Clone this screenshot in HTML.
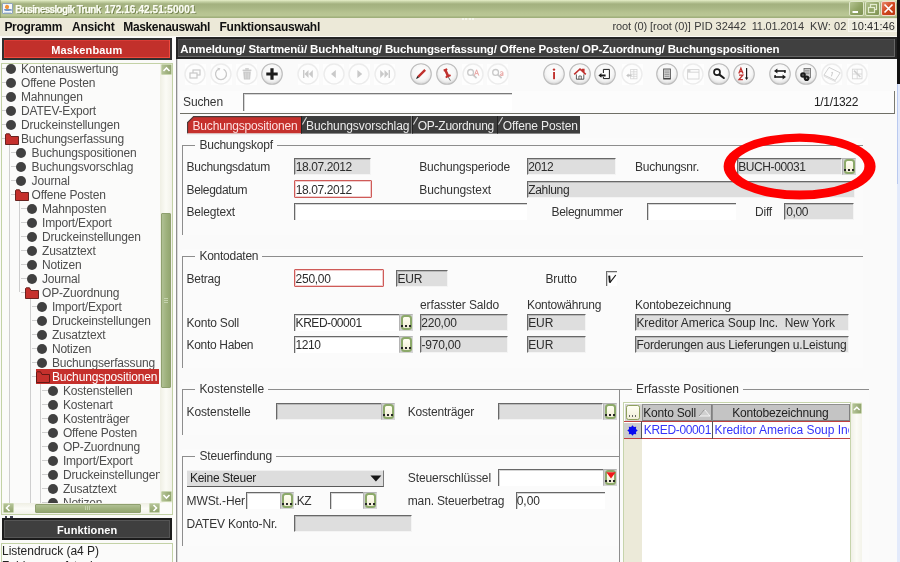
<!DOCTYPE html>
<html><head><meta charset="utf-8"><title>Businesslogik Trunk</title>
<style>
html,body{margin:0;padding:0;}
body{width:900px;height:562px;overflow:hidden;background:#fafafa;font-family:"Liberation Sans",sans-serif;}
#root{will-change:transform;position:relative;width:900px;height:562px;overflow:hidden;background:#f9f9f9;}
#root div,#root span,#root svg{position:absolute;box-sizing:border-box;}
#root span{white-space:pre;display:block;}

</style></head>
<body>
<div id="root">
<div style="left:0px;top:0px;width:900px;height:18px;background:linear-gradient(#e6efc9 0,#c9d5a9 1.5px,#a3b17f 4px,#a9b785 8px,#b7c492 13px,#b9c694 16px,#9dad79 17px,#a3b27f 18px);"></div>
<div style="left:1.5px;top:3px;width:11px;height:11px;background:#f6f7fa;border:1px solid #8ea4bc;border-radius:1px;"></div>
<div style="left:5.2px;top:4.6px;width:4.4px;height:4.2px;background:#f0923c;border-radius:50% 50% 40% 40%;transform:rotate(25deg);"></div>
<div style="left:4px;top:8.6px;width:6.6px;height:2.6px;background:#6f93c4;border-radius:0 0 2px 2px;"></div>
<div style="left:10px;top:8.8px;width:1.6px;height:1.8px;border:0.6px solid #6f93c4;border-radius:50%;"></div>
<div style="left:4px;top:12px;width:7px;height:0.8px;background:#c9d6e6;"></div>
<div style="left:0px;top:0px;width:1px;height:18px;background:rgba(120,135,90,0.55);"></div>
<span style="left:15.2px;top:3px;font-size:10px;line-height:14px;color:#fcfdf4;font-weight:bold;letter-spacing:-0.65px;text-shadow:1px 1px 0 #6f7d4a;-webkit-text-stroke:0.25px #fcfdf4;">Businesslogik Trunk</span>
<span style="left:104.4px;top:3px;font-size:10px;line-height:14px;color:#fcfdf4;font-weight:bold;letter-spacing:0.09px;text-shadow:1px 1px 0 #6f7d4a;-webkit-text-stroke:0.25px #fcfdf4;">172.16.42.51:50001</span>
<div style="left:849px;top:1px;width:15px;height:15px;background:linear-gradient(135deg,#b5c492,#8fa263 55%,#7f9354);border:1px solid #dfe6c9;border-radius:2px;"></div>
<div style="left:865px;top:1px;width:15px;height:15px;background:linear-gradient(135deg,#b5c492,#8fa263 55%,#7f9354);border:1px solid #dfe6c9;border-radius:2px;"></div>
<div style="left:881px;top:1px;width:15px;height:15px;background:linear-gradient(135deg,#e88a6a,#d0451f 50%,#b8380f);border:1px solid #f3d9cd;border-radius:2px;"></div>
<svg style="left:849px;top:1px" width="15" height="15"><rect x="3.5" y="10" width="5.5" height="2" fill="#fff"/></svg>
<svg style="left:865px;top:1px" width="15" height="15" fill="none" stroke="#e4ecd0" stroke-width="1.2"><rect x="5.5" y="3.5" width="6" height="5"/><rect x="3.5" y="6.5" width="6" height="5" fill="#93a667"/></svg>
<svg style="left:881px;top:1px" width="15" height="15" stroke="#fff" stroke-width="1.7"><path d="M3.5 3.5 L11.5 11.5 M11.5 3.5 L3.5 11.5"/></svg>
<div style="left:0px;top:18px;width:900px;height:19px;background:#ece9d8;"></div>
<div style="left:0px;top:35.5px;width:897px;height:1.5px;background:#fbfaf4;"></div>
<span style="left:4.4px;top:20px;font-size:12px;line-height:14px;color:#111;font-weight:bold;letter-spacing:-0.30px;">Programm</span>
<span style="left:72px;top:20px;font-size:12px;line-height:14px;color:#111;font-weight:bold;letter-spacing:-0.23px;">Ansicht</span>
<span style="left:123.3px;top:20px;font-size:12px;line-height:14px;color:#111;font-weight:bold;letter-spacing:-0.36px;">Maskenauswahl</span>
<span style="left:219.5px;top:20px;font-size:12px;line-height:14px;color:#111;font-weight:bold;letter-spacing:-0.26px;">Funktionsauswahl</span>
<div style="left:462px;top:18px;width:12px;height:2px;border-top:2px dotted #f7f8ee;"></div>
<div style="left:848px;top:19px;width:49px;height:13px;background:#efede0;border:1px solid #f6f5ec;"></div>
<span style="left:612.5px;top:19px;font-size:11px;line-height:14px;color:#3a3a3a;font-weight:normal;letter-spacing:-0.10px;">root (0) [root (0)]</span>
<span style="left:694.3px;top:19px;font-size:11px;line-height:14px;color:#3a3a3a;font-weight:normal;letter-spacing:-0.03px;">PID 32442</span>
<span style="left:751.7px;top:19px;font-size:11px;line-height:14px;color:#3a3a3a;font-weight:normal;letter-spacing:-0.20px;">11.01.2014</span>
<span style="left:810px;top:19px;font-size:11px;line-height:14px;color:#3a3a3a;font-weight:normal;letter-spacing:0.10px;">KW: 02</span>
<span style="left:851.5px;top:19px;font-size:11px;line-height:14px;color:#2a2a2a;font-weight:normal;letter-spacing:0.08px;">10:41:46</span>
<div style="left:897px;top:0px;width:3px;height:84px;background:#111;"></div>
<div style="left:897px;top:84px;width:3px;height:478px;background:#e3eafb;"></div>
<div style="left:897px;top:84px;width:1px;height:100px;background:#b9c9ef;"></div>
<div style="left:0px;top:37px;width:176px;height:525px;background:#fafaf8;"></div>
<div style="left:2px;top:38px;width:170px;height:21.7px;background:#c2302b;border:2px solid #303030;box-shadow:inset -1px -1px 0 0 #f04a3e, inset 1px 1px 0 0 #d83a34;"></div>
<span style="left:51.3px;top:43px;font-size:11px;line-height:14px;color:#fff;font-weight:bold;letter-spacing:0.13px;">Maskenbaum</span>
<div style="left:1px;top:63px;width:172px;height:452px;background:#fbfbfa;border:1px solid #c3d2a6;"></div>
<div style="left:2px;top:64px;width:158px;height:439px;overflow:hidden;">
<div style="left:6.5px;top:80px;width:1px;height:361px;border-left:1px solid #cfcfcf;"></div>
<div style="left:17px;top:136px;width:1px;height:92px;border-left:1px solid #cfcfcf;"></div>
<div style="left:27.5px;top:234px;width:1px;height:207px;border-left:1px solid #cfcfcf;"></div>
<div style="left:38px;top:319px;width:1px;height:122px;border-left:1px solid #cfcfcf;"></div>
<div style="left:0px;top:4px;width:5.0px;height:1px;border-top:1px solid #cfcfcf;"></div>
<div style="left:4.0px;top:-0.29999999999999716px;width:10px;height:10px;background:#404040;border-radius:50%;"></div>
<span style="left:19px;top:-2px;font-size:12px;line-height:14px;color:#4e4e4e;font-weight:normal;letter-spacing:-0.18px;">Kontenauswertung</span>
<div style="left:0px;top:18px;width:5.0px;height:1px;border-top:1px solid #cfcfcf;"></div>
<div style="left:4.0px;top:13.700000000000003px;width:10px;height:10px;background:#404040;border-radius:50%;"></div>
<span style="left:19px;top:12px;font-size:12px;line-height:14px;color:#4e4e4e;font-weight:normal;letter-spacing:-0.18px;">Offene Posten</span>
<div style="left:0px;top:32px;width:5.0px;height:1px;border-top:1px solid #cfcfcf;"></div>
<div style="left:4.0px;top:27.700000000000003px;width:10px;height:10px;background:#404040;border-radius:50%;"></div>
<span style="left:19px;top:26px;font-size:12px;line-height:14px;color:#4e4e4e;font-weight:normal;letter-spacing:-0.18px;">Mahnungen</span>
<div style="left:0px;top:46px;width:5.0px;height:1px;border-top:1px solid #cfcfcf;"></div>
<div style="left:4.0px;top:41.7px;width:10px;height:10px;background:#404040;border-radius:50%;"></div>
<span style="left:19px;top:40px;font-size:12px;line-height:14px;color:#4e4e4e;font-weight:normal;letter-spacing:-0.18px;">DATEV-Export</span>
<div style="left:0px;top:60px;width:5.0px;height:1px;border-top:1px solid #cfcfcf;"></div>
<div style="left:4.0px;top:55.7px;width:10px;height:10px;background:#404040;border-radius:50%;"></div>
<span style="left:19px;top:54px;font-size:12px;line-height:14px;color:#4e4e4e;font-weight:normal;letter-spacing:-0.18px;">Druckeinstellungen</span>
<div style="left:0px;top:74px;width:5.0px;height:1px;border-top:1px solid #cfcfcf;"></div>
<svg style="left:2.5px;top:68.69999999999999px" width="14" height="12" viewBox="0 0 14 12"><path d="M0.5 1.5 L0.5 11.5 L13.5 11.5 L13.5 3.5 L6 3.5 L4.5 0.8 L1.2 0.8 Z" fill="#c5302c" stroke="#5a1613" stroke-width="0.9"/></svg>
<span style="left:19px;top:68px;font-size:12px;line-height:14px;color:#4e4e4e;font-weight:normal;letter-spacing:-0.18px;">Buchungserfassung</span>
<div style="left:8.899999999999999px;top:88px;width:6.5px;height:1px;border-top:1px solid #cfcfcf;"></div>
<div style="left:14.399999999999999px;top:83.69999999999999px;width:10px;height:10px;background:#404040;border-radius:50%;"></div>
<span style="left:29.6px;top:82px;font-size:12px;line-height:14px;color:#4e4e4e;font-weight:normal;letter-spacing:-0.18px;">Buchungspositionen</span>
<div style="left:8.899999999999999px;top:102px;width:6.5px;height:1px;border-top:1px solid #cfcfcf;"></div>
<div style="left:14.399999999999999px;top:97.69999999999999px;width:10px;height:10px;background:#404040;border-radius:50%;"></div>
<span style="left:29.6px;top:96px;font-size:12px;line-height:14px;color:#4e4e4e;font-weight:normal;letter-spacing:-0.18px;">Buchungsvorschlag</span>
<div style="left:8.899999999999999px;top:116px;width:6.5px;height:1px;border-top:1px solid #cfcfcf;"></div>
<div style="left:14.399999999999999px;top:111.69999999999999px;width:10px;height:10px;background:#404040;border-radius:50%;"></div>
<span style="left:29.6px;top:110px;font-size:12px;line-height:14px;color:#4e4e4e;font-weight:normal;letter-spacing:-0.18px;">Journal</span>
<div style="left:8.899999999999999px;top:130px;width:6.5px;height:1px;border-top:1px solid #cfcfcf;"></div>
<svg style="left:12.899999999999999px;top:124.69999999999999px" width="14" height="12" viewBox="0 0 14 12"><path d="M0.5 1.5 L0.5 11.5 L13.5 11.5 L13.5 3.5 L6 3.5 L4.5 0.8 L1.2 0.8 Z" fill="#c5302c" stroke="#5a1613" stroke-width="0.9"/></svg>
<span style="left:29.6px;top:124px;font-size:12px;line-height:14px;color:#4e4e4e;font-weight:normal;letter-spacing:-0.18px;">Offene Posten</span>
<div style="left:19.3px;top:144px;width:6.5px;height:1px;border-top:1px solid #cfcfcf;"></div>
<div style="left:24.8px;top:139.7px;width:10px;height:10px;background:#404040;border-radius:50%;"></div>
<span style="left:40px;top:138px;font-size:12px;line-height:14px;color:#4e4e4e;font-weight:normal;letter-spacing:-0.18px;">Mahnposten</span>
<div style="left:19.3px;top:158px;width:6.5px;height:1px;border-top:1px solid #cfcfcf;"></div>
<div style="left:24.8px;top:153.7px;width:10px;height:10px;background:#404040;border-radius:50%;"></div>
<span style="left:40px;top:152px;font-size:12px;line-height:14px;color:#4e4e4e;font-weight:normal;letter-spacing:-0.18px;">Import/Export</span>
<div style="left:19.3px;top:172px;width:6.5px;height:1px;border-top:1px solid #cfcfcf;"></div>
<div style="left:24.8px;top:167.7px;width:10px;height:10px;background:#404040;border-radius:50%;"></div>
<span style="left:40px;top:166px;font-size:12px;line-height:14px;color:#4e4e4e;font-weight:normal;letter-spacing:-0.18px;">Druckeinstellungen</span>
<div style="left:19.3px;top:186px;width:6.5px;height:1px;border-top:1px solid #cfcfcf;"></div>
<div style="left:24.8px;top:181.7px;width:10px;height:10px;background:#404040;border-radius:50%;"></div>
<span style="left:40px;top:180px;font-size:12px;line-height:14px;color:#4e4e4e;font-weight:normal;letter-spacing:-0.18px;">Zusatztext</span>
<div style="left:19.3px;top:200px;width:6.5px;height:1px;border-top:1px solid #cfcfcf;"></div>
<div style="left:24.8px;top:195.7px;width:10px;height:10px;background:#404040;border-radius:50%;"></div>
<span style="left:40px;top:194px;font-size:12px;line-height:14px;color:#4e4e4e;font-weight:normal;letter-spacing:-0.18px;">Notizen</span>
<div style="left:19.3px;top:214px;width:6.5px;height:1px;border-top:1px solid #cfcfcf;"></div>
<div style="left:24.8px;top:209.7px;width:10px;height:10px;background:#404040;border-radius:50%;"></div>
<span style="left:40px;top:208px;font-size:12px;line-height:14px;color:#4e4e4e;font-weight:normal;letter-spacing:-0.18px;">Journal</span>
<div style="left:19.3px;top:228px;width:6.5px;height:1px;border-top:1px solid #cfcfcf;"></div>
<svg style="left:23.3px;top:222.7px" width="14" height="12" viewBox="0 0 14 12"><path d="M0.5 1.5 L0.5 11.5 L13.5 11.5 L13.5 3.5 L6 3.5 L4.5 0.8 L1.2 0.8 Z" fill="#c5302c" stroke="#5a1613" stroke-width="0.9"/></svg>
<span style="left:40px;top:222px;font-size:12px;line-height:14px;color:#4e4e4e;font-weight:normal;letter-spacing:-0.18px;">OP-Zuordnung</span>
<div style="left:29.700000000000003px;top:242px;width:6.5px;height:1px;border-top:1px solid #cfcfcf;"></div>
<div style="left:35.2px;top:237.7px;width:10px;height:10px;background:#404040;border-radius:50%;"></div>
<span style="left:49.9px;top:236px;font-size:12px;line-height:14px;color:#4e4e4e;font-weight:normal;letter-spacing:-0.18px;">Import/Export</span>
<div style="left:29.700000000000003px;top:256px;width:6.5px;height:1px;border-top:1px solid #cfcfcf;"></div>
<div style="left:35.2px;top:251.7px;width:10px;height:10px;background:#404040;border-radius:50%;"></div>
<span style="left:49.9px;top:250px;font-size:12px;line-height:14px;color:#4e4e4e;font-weight:normal;letter-spacing:-0.18px;">Druckeinstellungen</span>
<div style="left:29.700000000000003px;top:270px;width:6.5px;height:1px;border-top:1px solid #cfcfcf;"></div>
<div style="left:35.2px;top:265.7px;width:10px;height:10px;background:#404040;border-radius:50%;"></div>
<span style="left:49.9px;top:264px;font-size:12px;line-height:14px;color:#4e4e4e;font-weight:normal;letter-spacing:-0.18px;">Zusatztext</span>
<div style="left:29.700000000000003px;top:284px;width:6.5px;height:1px;border-top:1px solid #cfcfcf;"></div>
<div style="left:35.2px;top:279.7px;width:10px;height:10px;background:#404040;border-radius:50%;"></div>
<span style="left:49.9px;top:278px;font-size:12px;line-height:14px;color:#4e4e4e;font-weight:normal;letter-spacing:-0.18px;">Notizen</span>
<div style="left:29.700000000000003px;top:298px;width:6.5px;height:1px;border-top:1px solid #cfcfcf;"></div>
<div style="left:35.2px;top:293.7px;width:10px;height:10px;background:#404040;border-radius:50%;"></div>
<span style="left:49.9px;top:292px;font-size:12px;line-height:14px;color:#4e4e4e;font-weight:normal;letter-spacing:-0.18px;">Buchungserfassung</span>
<div style="left:29.700000000000003px;top:312px;width:6.5px;height:1px;border-top:1px solid #cfcfcf;"></div>
<div style="left:33.7px;top:305.4px;width:123.8px;height:14.4px;background:#c5302c;"></div>
<svg style="left:33.7px;top:306.7px" width="14" height="12" viewBox="0 0 14 12"><path d="M0.5 1.5 L0.5 11.5 L13.5 11.5 L13.5 3.5 L6 3.5 L4.5 0.8 L1.2 0.8 Z" fill="#c5302c" stroke="#5a1613" stroke-width="0.9"/></svg>
<span style="left:49.9px;top:306px;font-size:12px;line-height:14px;color:#fff;font-weight:normal;letter-spacing:-0.15px;">Buchungspositionen</span>
<div style="left:40.1px;top:326px;width:6.5px;height:1px;border-top:1px solid #cfcfcf;"></div>
<div style="left:45.6px;top:321.7px;width:10px;height:10px;background:#404040;border-radius:50%;"></div>
<span style="left:60.9px;top:320px;font-size:12px;line-height:14px;color:#4e4e4e;font-weight:normal;letter-spacing:-0.18px;">Kostenstellen</span>
<div style="left:40.1px;top:340px;width:6.5px;height:1px;border-top:1px solid #cfcfcf;"></div>
<div style="left:45.6px;top:335.7px;width:10px;height:10px;background:#404040;border-radius:50%;"></div>
<span style="left:60.9px;top:334px;font-size:12px;line-height:14px;color:#4e4e4e;font-weight:normal;letter-spacing:-0.18px;">Kostenart</span>
<div style="left:40.1px;top:354px;width:6.5px;height:1px;border-top:1px solid #cfcfcf;"></div>
<div style="left:45.6px;top:349.7px;width:10px;height:10px;background:#404040;border-radius:50%;"></div>
<span style="left:60.9px;top:348px;font-size:12px;line-height:14px;color:#4e4e4e;font-weight:normal;letter-spacing:-0.18px;">Kostenträger</span>
<div style="left:40.1px;top:368px;width:6.5px;height:1px;border-top:1px solid #cfcfcf;"></div>
<div style="left:45.6px;top:363.7px;width:10px;height:10px;background:#404040;border-radius:50%;"></div>
<span style="left:60.9px;top:362px;font-size:12px;line-height:14px;color:#4e4e4e;font-weight:normal;letter-spacing:-0.18px;">Offene Posten</span>
<div style="left:40.1px;top:382px;width:6.5px;height:1px;border-top:1px solid #cfcfcf;"></div>
<div style="left:45.6px;top:377.7px;width:10px;height:10px;background:#404040;border-radius:50%;"></div>
<span style="left:60.9px;top:376px;font-size:12px;line-height:14px;color:#4e4e4e;font-weight:normal;letter-spacing:-0.18px;">OP-Zuordnung</span>
<div style="left:40.1px;top:396px;width:6.5px;height:1px;border-top:1px solid #cfcfcf;"></div>
<div style="left:45.6px;top:391.7px;width:10px;height:10px;background:#404040;border-radius:50%;"></div>
<span style="left:60.9px;top:390px;font-size:12px;line-height:14px;color:#4e4e4e;font-weight:normal;letter-spacing:-0.18px;">Import/Export</span>
<div style="left:40.1px;top:410px;width:6.5px;height:1px;border-top:1px solid #cfcfcf;"></div>
<div style="left:45.6px;top:405.7px;width:10px;height:10px;background:#404040;border-radius:50%;"></div>
<span style="left:60.9px;top:404px;font-size:12px;line-height:14px;color:#4e4e4e;font-weight:normal;letter-spacing:-0.18px;">Druckeinstellungen</span>
<div style="left:40.1px;top:424px;width:6.5px;height:1px;border-top:1px solid #cfcfcf;"></div>
<div style="left:45.6px;top:419.7px;width:10px;height:10px;background:#404040;border-radius:50%;"></div>
<span style="left:60.9px;top:418px;font-size:12px;line-height:14px;color:#4e4e4e;font-weight:normal;letter-spacing:-0.18px;">Zusatztext</span>
<div style="left:40.1px;top:438px;width:6.5px;height:1px;border-top:1px solid #cfcfcf;"></div>
<div style="left:45.6px;top:433.7px;width:10px;height:10px;background:#404040;border-radius:50%;"></div>
<span style="left:60.9px;top:432px;font-size:12px;line-height:14px;color:#4e4e4e;font-weight:normal;letter-spacing:-0.18px;">Notizen</span>
</div>
<div style="left:160px;top:64px;width:12px;height:439px;background:linear-gradient(90deg,#efefe4,#fbfbf6 50%,#f1f1e8);"></div>
<div style="left:160.5px;top:64px;width:11px;height:11px;background:linear-gradient(90deg,#b4c397,#9fb07d 60%,#92a570);border:1px solid #c9d6b0;border-radius:1px;"></div>
<svg style="left:160.5px;top:64px" width="11" height="11" fill="none" stroke="#fff" stroke-width="1.6"><path d="M2.5 7 L5.5 4 L8.5 7"/></svg>
<div style="left:160.5px;top:491px;width:11px;height:11px;background:linear-gradient(90deg,#b4c397,#9fb07d 60%,#92a570);border:1px solid #c9d6b0;border-radius:1px;"></div>
<svg style="left:160.5px;top:491px" width="11" height="11" fill="none" stroke="#fff" stroke-width="1.6"><path d="M2.5 4 L5.5 7 L8.5 4"/></svg>
<div style="left:161px;top:213px;width:10px;height:175px;background:linear-gradient(90deg,#b0c094,#a0b27e 50%,#93a670);border:1px solid #8fa06f;border-radius:1px;"></div>
<div style="left:164px;top:298px;width:4px;height:5px;border-top:1px solid #c5d2ad;border-bottom:1px solid #c5d2ad;"></div>
<div style="left:164px;top:300px;width:4px;height:1px;background:#c5d2ad;"></div>
<div style="left:2px;top:503px;width:158px;height:11px;background:linear-gradient(#efefe4,#fbfbf6 50%,#f1f1e8);"></div>
<div style="left:2.5px;top:503px;width:11px;height:10px;background:linear-gradient(#b4c397,#9fb07d 60%,#92a570);border:1px solid #c9d6b0;border-radius:1px;"></div>
<svg style="left:2.5px;top:503px" width="11" height="10" fill="none" stroke="#fff" stroke-width="1.6"><path d="M6.5 2 L3.5 5 L6.5 8"/></svg>
<div style="left:149px;top:503px;width:11px;height:10px;background:linear-gradient(#b4c397,#9fb07d 60%,#92a570);border:1px solid #c9d6b0;border-radius:1px;"></div>
<svg style="left:149px;top:503px" width="11" height="10" fill="none" stroke="#fff" stroke-width="1.6"><path d="M4.5 2 L7.5 5 L4.5 8"/></svg>
<div style="left:35px;top:503.5px;width:106px;height:9px;background:linear-gradient(#b0c094,#a0b27e 50%,#93a670);border:1px solid #8fa06f;border-radius:1px;"></div>
<div style="left:85px;top:506px;width:5px;height:4px;border-left:1px solid #c5d2ad;border-right:1px solid #c5d2ad;"></div>
<div style="left:87px;top:506px;width:1px;height:4px;background:#c5d2ad;"></div>
<div style="left:5px;top:516px;width:2px;height:1.5px;background:#445;"></div>
<div style="left:10px;top:516px;width:3px;height:1.5px;background:#445;"></div>
<div style="left:2px;top:517.5px;width:170px;height:22.5px;background:#3f3f3f;border:2px solid #1c1c1c;box-shadow:inset 0 0 0 1px #555;"></div>
<span style="left:57px;top:523px;font-size:11px;line-height:14px;color:#fff;font-weight:bold;letter-spacing:0.10px;">Funktionen</span>
<div style="left:1px;top:543px;width:172px;height:25px;background:#fbfbfa;border:1px solid #c3d2a6;"></div>
<span style="left:2px;top:544px;font-size:12px;line-height:14px;color:#222;font-weight:normal;letter-spacing:-0.02px;">Listendruck (a4 P)</span>
<span style="left:2px;top:559px;font-size:12px;line-height:14px;color:#222;font-weight:normal;">Zahlungsaufstockung</span>
<div style="left:173px;top:37px;width:3px;height:525px;background:#fdfdfb;"></div>
<div style="left:176px;top:59px;width:1px;height:503px;background:#8e8e8e;"></div>
<div style="left:177px;top:59px;width:1px;height:503px;background:#d9d9d9;"></div>
<div style="left:177.5px;top:59px;width:719.5px;height:503px;background:#fafafa;"></div>
<div style="left:176px;top:37px;width:721px;height:22px;background:#404040;border:2px solid #242424;box-shadow:inset -1px -1px 0 0 #666, inset 1px 1px 0 0 #4c4c4c;"></div>
<span style="left:180.3px;top:42px;font-size:11.5px;line-height:14px;color:#fff;font-weight:bold;letter-spacing:-0.14px;">Anmeldung/ Startmenü/ Buchhaltung/ Buchungserfassung/ Offene Posten/ OP-Zuordnung/ Buchungspositionen</span>
<div style="left:184.8px;top:63.8px;width:21px;height:21px;background:#fefefe;"></div>
<svg style="left:183.3px;top:62.3px" width="24" height="24" viewBox="0 0 24 24"><circle cx="12" cy="12" r="10" fill="#fdfdfd" stroke="#ececec" stroke-width="1.5"/></svg>
<svg style="left:185.3px;top:64.3px" width="20" height="20" viewBox="0 0 20 20"><g fill="#fdfdfd" stroke="#c9c9c9" stroke-width="1.2"><rect x="8" y="6" width="7" height="5"/><rect x="5" y="9" width="7" height="5"/></g></svg>
<div style="left:210.5px;top:63.8px;width:21px;height:21px;background:#fefefe;"></div>
<svg style="left:209px;top:62.3px" width="24" height="24" viewBox="0 0 24 24"><circle cx="12" cy="12" r="10" fill="#fdfdfd" stroke="#ececec" stroke-width="1.5"/></svg>
<svg style="left:211px;top:64.3px" width="20" height="20" viewBox="0 0 20 20"><path d="M7.6 5.2 A5.5 5.5 0 1 0 12.6 5.3" fill="none" stroke="#c9c9c9" stroke-width="1.3"/><path d="M6.2 3.8 L9.4 4.2 L8 6.8 Z" fill="#c9c9c9"/></svg>
<div style="left:236.1px;top:63.8px;width:21px;height:21px;background:#fefefe;"></div>
<svg style="left:234.6px;top:62.3px" width="24" height="24" viewBox="0 0 24 24"><circle cx="12" cy="12" r="10" fill="#fdfdfd" stroke="#ececec" stroke-width="1.5"/></svg>
<svg style="left:236.6px;top:64.3px" width="20" height="20" viewBox="0 0 20 20"><g fill="#c9c9c9"><rect x="5.6" y="5.6" width="8.8" height="1.5"/><rect x="8.2" y="4.2" width="3.6" height="1.5"/><path d="M6.2 7.6 L13.8 7.6 L13.1 15.6 L6.9 15.6 Z"/></g><path d="M8.4 8.6 V14.6 M10 8.6 V14.6 M11.6 8.6 V14.6" stroke="#e2e2e2" stroke-width="0.6"/></svg>
<svg style="left:260px;top:62.3px" width="24" height="24" viewBox="0 0 24 24"><defs><radialGradient id="g272" cx="50%" cy="40%" r="60%"><stop offset="0" stop-color="#fefefe"/><stop offset="0.62" stop-color="#f7f7f7"/><stop offset="0.8" stop-color="#ececec"/><stop offset="0.9" stop-color="#dddddd"/></radialGradient></defs><circle cx="12" cy="12" r="10.3" fill="url(#g272)" stroke="#bcbcbc" stroke-width="1.1"/></svg>
<svg style="left:262px;top:64.3px" width="20" height="20" viewBox="0 0 20 20"><path d="M8.4 4.3 h3.2 v4.1 h4.1 v3.2 h-4.1 v4.1 h-3.2 v-4.1 h-4.1 v-3.2 h4.1 Z" fill="#1c1c1c"/></svg>
<div style="left:297.7px;top:63.8px;width:21px;height:21px;background:#fefefe;"></div>
<svg style="left:296.2px;top:62.3px" width="24" height="24" viewBox="0 0 24 24"><circle cx="12" cy="12" r="10" fill="#fdfdfd" stroke="#ececec" stroke-width="1.5"/></svg>
<svg style="left:298.2px;top:64.3px" width="20" height="20" viewBox="0 0 20 20"><g fill="#c9c9c9"><rect x="5" y="6" width="1.4" height="8"/><path d="M10.5 6 L10.5 14 L6.5 10 Z"/><path d="M14.8 6 L14.8 14 L10.8 10 Z"/></g></svg>
<div style="left:323.0px;top:63.8px;width:21px;height:21px;background:#fefefe;"></div>
<svg style="left:321.5px;top:62.3px" width="24" height="24" viewBox="0 0 24 24"><circle cx="12" cy="12" r="10" fill="#fdfdfd" stroke="#ececec" stroke-width="1.5"/></svg>
<svg style="left:323.5px;top:64.3px" width="20" height="20" viewBox="0 0 20 20"><path d="M11.8 6 L11.8 14 L7 10 Z" fill="#c9c9c9"/></svg>
<div style="left:348.7px;top:63.8px;width:21px;height:21px;background:#fefefe;"></div>
<svg style="left:347.2px;top:62.3px" width="24" height="24" viewBox="0 0 24 24"><circle cx="12" cy="12" r="10" fill="#fdfdfd" stroke="#ececec" stroke-width="1.5"/></svg>
<svg style="left:349.2px;top:64.3px" width="20" height="20" viewBox="0 0 20 20"><path d="M8.4 6 L8.4 14 L13.2 10 Z" fill="#c9c9c9"/></svg>
<div style="left:374.0px;top:63.8px;width:21px;height:21px;background:#fefefe;"></div>
<svg style="left:372.5px;top:62.3px" width="24" height="24" viewBox="0 0 24 24"><circle cx="12" cy="12" r="10" fill="#fdfdfd" stroke="#ececec" stroke-width="1.5"/></svg>
<svg style="left:374.5px;top:64.3px" width="20" height="20" viewBox="0 0 20 20"><g fill="#c9c9c9"><rect x="13.6" y="6" width="1.4" height="8"/><path d="M9.5 6 L9.5 14 L13.5 10 Z"/><path d="M5.2 6 L5.2 14 L9.2 10 Z"/></g></svg>
<svg style="left:409.3px;top:62.3px" width="24" height="24" viewBox="0 0 24 24"><defs><radialGradient id="g421" cx="50%" cy="40%" r="60%"><stop offset="0" stop-color="#fefefe"/><stop offset="0.62" stop-color="#f7f7f7"/><stop offset="0.8" stop-color="#ececec"/><stop offset="0.9" stop-color="#dddddd"/></radialGradient></defs><circle cx="12" cy="12" r="10.3" fill="url(#g421)" stroke="#bcbcbc" stroke-width="1.1"/></svg>
<svg style="left:411.3px;top:64.3px" width="20" height="20" viewBox="0 0 20 20"><path d="M13.3 5 L15 6.7 L8 13.7 L6.3 12 Z" fill="#c0312e"/><path d="M6.3 12 L8 13.7 L5 15 Z" fill="#1c1c1c"/></svg>
<svg style="left:434.6px;top:62.3px" width="24" height="24" viewBox="0 0 24 24"><defs><radialGradient id="g446" cx="50%" cy="40%" r="60%"><stop offset="0" stop-color="#fefefe"/><stop offset="0.62" stop-color="#f7f7f7"/><stop offset="0.8" stop-color="#ececec"/><stop offset="0.9" stop-color="#dddddd"/></radialGradient></defs><circle cx="12" cy="12" r="10.3" fill="url(#g446)" stroke="#bcbcbc" stroke-width="1.1"/></svg>
<svg style="left:436.6px;top:64.3px" width="20" height="20" viewBox="0 0 20 20"><g fill="#c0312e"><path d="M6.4 5.6 L9.8 4.2 L10.6 5.8 L9.9 6.4 L11.8 10.4 L13.4 10.6 L14 12 L9 14.2 L8.4 12.8 L9.4 11.6 L7.6 7.6 L6.9 7.4 Z"/></g><path d="M11.4 13.2 L13.4 16.6" stroke="#555" stroke-width="0.9"/></svg>
<div style="left:462.0px;top:63.8px;width:21px;height:21px;background:#fefefe;"></div>
<svg style="left:460.5px;top:62.3px" width="24" height="24" viewBox="0 0 24 24"><circle cx="12" cy="12" r="10" fill="#fdfdfd" stroke="#ececec" stroke-width="1.5"/></svg>
<svg style="left:462.5px;top:64.3px" width="20" height="20" viewBox="0 0 20 20"><circle cx="7.6" cy="8.4" r="2.9" fill="none" stroke="#c9c9c9" stroke-width="1.3"/><path d="M9.8 10.6 L13.6 14.2" stroke="#c9c9c9" stroke-width="1.7"/><path d="M11.4 11.6 L13.6 5.8 L15.8 11.6 M12.3 9.6 H14.9" fill="none" stroke="#e9a4a2" stroke-width="1"/></svg>
<div style="left:487.2px;top:63.8px;width:21px;height:21px;background:#fefefe;"></div>
<svg style="left:485.7px;top:62.3px" width="24" height="24" viewBox="0 0 24 24"><circle cx="12" cy="12" r="10" fill="#fdfdfd" stroke="#ececec" stroke-width="1.5"/></svg>
<svg style="left:487.7px;top:64.3px" width="20" height="20" viewBox="0 0 20 20"><circle cx="7.6" cy="8.4" r="2.9" fill="none" stroke="#c9c9c9" stroke-width="1.3"/><path d="M9.8 10.6 L13.6 14.2" stroke="#c9c9c9" stroke-width="1.7"/><path d="M12.2 8.2 Q13.6 7 14.9 8.2 V11.8 M14.9 9.8 Q12 9.6 12.1 10.9 Q12.4 12.2 14.9 11" fill="none" stroke="#e9a4a2" stroke-width="1"/></svg>
<svg style="left:542.4px;top:62.3px" width="24" height="24" viewBox="0 0 24 24"><defs><radialGradient id="g554" cx="50%" cy="40%" r="60%"><stop offset="0" stop-color="#fefefe"/><stop offset="0.62" stop-color="#f7f7f7"/><stop offset="0.8" stop-color="#ececec"/><stop offset="0.9" stop-color="#dddddd"/></radialGradient></defs><circle cx="12" cy="12" r="10.3" fill="url(#g554)" stroke="#bcbcbc" stroke-width="1.1"/></svg>
<svg style="left:544.4px;top:64.3px" width="20" height="20" viewBox="0 0 20 20"><rect x="9.1" y="8" width="1.9" height="7.2" fill="#c0312e"/><circle cx="10" cy="5.6" r="1.2" fill="#c0312e"/></svg>
<svg style="left:568.3px;top:62.3px" width="24" height="24" viewBox="0 0 24 24"><defs><radialGradient id="g580" cx="50%" cy="40%" r="60%"><stop offset="0" stop-color="#fefefe"/><stop offset="0.62" stop-color="#f7f7f7"/><stop offset="0.8" stop-color="#ececec"/><stop offset="0.9" stop-color="#dddddd"/></radialGradient></defs><circle cx="12" cy="12" r="10.3" fill="url(#g580)" stroke="#bcbcbc" stroke-width="1.1"/></svg>
<svg style="left:570.3px;top:64.3px" width="20" height="20" viewBox="0 0 20 20"><path d="M6.4 10 L6.4 15.2 L13.8 15.2 L13.8 10 L10 6.6 Z" fill="#fff"/><path d="M6.4 10.4 L6.4 15.2 L13.8 15.2 L13.8 10.4" fill="none" stroke="#333" stroke-width="0.8"/><path d="M8.9 15.2 V12 H11.3 V15.2" fill="none" stroke="#333" stroke-width="0.7"/><path d="M4.2 10.4 L10 5 L12.6 7.4 L12.6 5.6 L13.8 5.6 L13.8 8.6 L15.8 10.4" fill="none" stroke="#c0312e" stroke-width="1.6"/></svg>
<svg style="left:593.4px;top:62.3px" width="24" height="24" viewBox="0 0 24 24"><defs><radialGradient id="g605" cx="50%" cy="40%" r="60%"><stop offset="0" stop-color="#fefefe"/><stop offset="0.62" stop-color="#f7f7f7"/><stop offset="0.8" stop-color="#ececec"/><stop offset="0.9" stop-color="#dddddd"/></radialGradient></defs><circle cx="12" cy="12" r="10.3" fill="url(#g605)" stroke="#bcbcbc" stroke-width="1.1"/></svg>
<svg style="left:595.4px;top:64.3px" width="20" height="20" viewBox="0 0 20 20"><path d="M8.4 5.4 L14.4 5.4 L14.4 14.6 L8.4 14.6 L8.4 13" fill="#fff" stroke="#1c1c1c" stroke-width="1"/><path d="M8.4 9 L8.4 5.4" stroke="#1c1c1c" stroke-width="1"/><path d="M3.4 11.4 L6.4 9 L6.4 10.4 L10.6 10.4 L10.6 12.4 L6.4 12.4 L6.4 13.8 Z" fill="#1c1c1c"/></svg>
<div style="left:621.5px;top:63.8px;width:21px;height:21px;background:#fefefe;"></div>
<svg style="left:620px;top:62.3px" width="24" height="24" viewBox="0 0 24 24"><circle cx="12" cy="12" r="10" fill="#fdfdfd" stroke="#ececec" stroke-width="1.5"/></svg>
<svg style="left:622px;top:64.3px" width="20" height="20" viewBox="0 0 20 20"><g fill="none" stroke="#d6d6d6" stroke-width="0.8"><rect x="8.6" y="5.4" width="6.4" height="9.4"/><path d="M8.6 7.8 H15 M8.6 10.2 H15 M8.6 12.4 H15 M11.8 5.4 V14.8"/></g><path d="M4.2 11.4 L6.6 9.4 L6.6 10.6 L9.6 10.6 L9.6 12.2 L6.6 12.2 L6.6 13.4 Z" fill="#c4c4c4"/></svg>
<svg style="left:655.1px;top:62.3px" width="24" height="24" viewBox="0 0 24 24"><defs><radialGradient id="g667" cx="50%" cy="40%" r="60%"><stop offset="0" stop-color="#fefefe"/><stop offset="0.62" stop-color="#f7f7f7"/><stop offset="0.8" stop-color="#ececec"/><stop offset="0.9" stop-color="#dddddd"/></radialGradient></defs><circle cx="12" cy="12" r="10.3" fill="url(#g667)" stroke="#bcbcbc" stroke-width="1.1"/></svg>
<svg style="left:657.1px;top:64.3px" width="20" height="20" viewBox="0 0 20 20"><rect x="6.6" y="5" width="6.8" height="10" fill="#d9d9d9" stroke="#555" stroke-width="0.9"/><path d="M7.6 7 H12.4 M7.6 8.8 H12.4 M7.6 10.6 H12.4 M7.6 12.4 H12.4" stroke="#888" stroke-width="0.8"/><rect x="6.6" y="14" width="6.8" height="1.2" fill="#444"/></svg>
<div style="left:682.5px;top:63.8px;width:21px;height:21px;background:#fefefe;"></div>
<svg style="left:681px;top:62.3px" width="24" height="24" viewBox="0 0 24 24"><circle cx="12" cy="12" r="10" fill="#fdfdfd" stroke="#ececec" stroke-width="1.5"/></svg>
<svg style="left:683px;top:64.3px" width="20" height="20" viewBox="0 0 20 20"><g fill="#fdfdfd" stroke="#d4d4d4" stroke-width="0.9"><rect x="4.6" y="5.6" width="11.4" height="9.4"/><path d="M4.6 8.2 H16"/><rect x="5.4" y="6.2" width="1.6" height="1.4" fill="#d4d4d4"/></g></svg>
<svg style="left:706.5px;top:62.3px" width="24" height="24" viewBox="0 0 24 24"><defs><radialGradient id="g718" cx="50%" cy="40%" r="60%"><stop offset="0" stop-color="#fefefe"/><stop offset="0.62" stop-color="#f7f7f7"/><stop offset="0.8" stop-color="#ececec"/><stop offset="0.9" stop-color="#dddddd"/></radialGradient></defs><circle cx="12" cy="12" r="10.3" fill="url(#g718)" stroke="#bcbcbc" stroke-width="1.1"/></svg>
<svg style="left:708.5px;top:64.3px" width="20" height="20" viewBox="0 0 20 20"><circle cx="8" cy="8.2" r="3" fill="#fff" stroke="#1c1c1c" stroke-width="1.7"/><path d="M10.4 10.6 L14.8 14" stroke="#1c1c1c" stroke-width="2.1" stroke-linecap="round"/></svg>
<svg style="left:732.4px;top:62.3px" width="24" height="24" viewBox="0 0 24 24"><defs><radialGradient id="g744" cx="50%" cy="40%" r="60%"><stop offset="0" stop-color="#fefefe"/><stop offset="0.62" stop-color="#f7f7f7"/><stop offset="0.8" stop-color="#ececec"/><stop offset="0.9" stop-color="#dddddd"/></radialGradient></defs><circle cx="12" cy="12" r="10.3" fill="url(#g744)" stroke="#bcbcbc" stroke-width="1.1"/></svg>
<svg style="left:734.4px;top:64.3px" width="20" height="20" viewBox="0 0 20 20"><path d="M4.8 9.4 L6.9 4.2 L9 9.4 M5.7 7.7 H8.1" fill="none" stroke="#c0312e" stroke-width="1.3"/><path d="M5 11.2 H8.8 L5 15.6 H8.9" fill="none" stroke="#c0312e" stroke-width="1.3"/><path d="M12.6 4 V14" stroke="#1c1c1c" stroke-width="1.2"/><path d="M10.8 13.4 H14.4 L12.6 16 Z" fill="#1c1c1c"/></svg>
<svg style="left:768.3px;top:62.3px" width="24" height="24" viewBox="0 0 24 24"><defs><radialGradient id="g780" cx="50%" cy="40%" r="60%"><stop offset="0" stop-color="#fefefe"/><stop offset="0.62" stop-color="#f7f7f7"/><stop offset="0.8" stop-color="#ececec"/><stop offset="0.9" stop-color="#dddddd"/></radialGradient></defs><circle cx="12" cy="12" r="10.3" fill="url(#g780)" stroke="#bcbcbc" stroke-width="1.1"/></svg>
<svg style="left:770.3px;top:64.3px" width="20" height="20" viewBox="0 0 20 20"><g fill="#1c1c1c"><path d="M7.4 4.6 L7.4 9.4 L4 7 Z"/><rect x="7" y="6.2" width="8.6" height="1.6"/><rect x="14.2" y="6.2" width="1.4" height="2.8"/><path d="M12.6 10.6 L12.6 15.4 L16 13 Z"/><rect x="4.4" y="12.2" width="8.6" height="1.6"/><rect x="4.4" y="11" width="1.4" height="2.8"/></g></svg>
<svg style="left:794.2px;top:62.3px" width="24" height="24" viewBox="0 0 24 24"><defs><radialGradient id="g806" cx="50%" cy="40%" r="60%"><stop offset="0" stop-color="#fefefe"/><stop offset="0.62" stop-color="#f7f7f7"/><stop offset="0.8" stop-color="#ececec"/><stop offset="0.9" stop-color="#dddddd"/></radialGradient></defs><circle cx="12" cy="12" r="10.3" fill="url(#g806)" stroke="#bcbcbc" stroke-width="1.1"/></svg>
<svg style="left:796.2px;top:64.3px" width="20" height="20" viewBox="0 0 20 20"><rect x="8" y="4.4" width="6.4" height="9.4" fill="#cfcfcf" stroke="#666" stroke-width="0.8"/><path d="M9 6.4 H13.4 M9 8 H13.4 M9 9.6 H13.4" stroke="#888" stroke-width="0.7"/><circle cx="7" cy="11" r="2.8" fill="#1c1c1c"/><circle cx="10.6" cy="14.2" r="2.8" fill="#1c1c1c"/><circle cx="7" cy="11" r="0.7" fill="#999"/><circle cx="10.6" cy="14.2" r="0.7" fill="#999"/></svg>
<div style="left:821.1px;top:63.8px;width:21px;height:21px;background:#fefefe;"></div>
<svg style="left:819.6px;top:62.3px" width="24" height="24" viewBox="0 0 24 24"><circle cx="12" cy="12" r="10" fill="#fdfdfd" stroke="#ececec" stroke-width="1.5"/></svg>
<svg style="left:821.6px;top:64.3px" width="20" height="20" viewBox="0 0 20 20"><path d="M7 3.4 L18.2 8.8 L13.2 16.4 L2 11 Z" fill="#fdfdfd" stroke="#d2d2d2" stroke-width="1"/><path d="M2 11 L2.4 12.4 L13.4 17.6 L13.2 16.4" fill="none" stroke="#d8d8d8" stroke-width="0.8"/><path d="M9.4 8.6 L10.6 8.4 L9.4 12.4" fill="none" stroke="#c4c4c4" stroke-width="0.9"/></svg>
<div style="left:846.8px;top:63.8px;width:21px;height:21px;background:#fefefe;"></div>
<svg style="left:845.3px;top:62.3px" width="24" height="24" viewBox="0 0 24 24"><circle cx="12" cy="12" r="10" fill="#fdfdfd" stroke="#ececec" stroke-width="1.5"/></svg>
<svg style="left:847.3px;top:64.3px" width="20" height="20" viewBox="0 0 20 20"><g fill="none" stroke="#d7d7d7" stroke-width="0.9"><rect x="5.4" y="5.2" width="9.6" height="9.6"/><path d="M10.2 5.2 V14.8 M5.4 10 H15"/></g><path d="M7 6.6 L13.4 13" stroke="#cfcfcf" stroke-width="1.6"/></svg>
<div style="left:180px;top:91px;width:714.5px;height:23.3px;background:#fcfcfc;border-bottom:1.5px solid #6f6f66;border-right:1.5px solid #7a7a70;"></div>
<span style="left:183px;top:95px;font-size:12px;line-height:14px;color:#343434;font-weight:normal;letter-spacing:-0.12px;">Suchen</span>
<div style="left:243px;top:93px;width:269px;height:17.5px;background:#fff;border-top:1px solid #7a7a7a;border-left:1px solid #7a7a7a;box-shadow:inset 1px 1px 0 rgba(90,90,90,0.25);"></div>
<span style="left:814px;top:95px;font-size:12px;line-height:14px;color:#222;font-weight:normal;letter-spacing:-0.34px;">1/1/1322</span>
<svg style="left:187px;top:116.3px" width="114.30000000000001" height="19" viewBox="0 0 114.30000000000001 19"><path d="M0.5 17.5 L0.5 6.6 L6.6 0.6 L114.30000000000001 0.6 L114.30000000000001 17.5 Z" fill="#c5302c"/><path d="M0.5 17.5 L0.5 6.6 L6.6 0.6 L114.30000000000001 0.6" fill="none" stroke="#4a3a3a" stroke-width="1.2"/><rect x="0" y="17.5" width="114.30000000000001" height="0.9" fill="#dcdcdc"/></svg>
<span style="left:192.5px;top:119px;font-size:12px;line-height:14px;color:#fde0e0;font-weight:normal;letter-spacing:-0.17px;">Buchungspositionen</span>
<svg style="left:301.3px;top:116.3px" width="110.69999999999999" height="19" viewBox="0 0 110.69999999999999 19"><rect x="0" y="0" width="110.69999999999999" height="17.6" fill="#3d3d3d"/><rect x="0" y="0" width="1" height="17.6" fill="#222"/><path d="M1.4 8.6 L5.6 1.2" fill="none" stroke="#d8d8d8" stroke-width="1.1"/></svg>
<span style="left:306px;top:119px;font-size:12px;line-height:14px;color:#ececec;font-weight:normal;letter-spacing:-0.08px;">Buchungsvorschlag</span>
<svg style="left:412px;top:116.3px" width="85.19999999999999" height="19" viewBox="0 0 85.19999999999999 19"><rect x="0" y="0" width="85.19999999999999" height="17.6" fill="#3d3d3d"/><rect x="0" y="0" width="1" height="17.6" fill="#222"/><path d="M1.4 8.6 L5.6 1.2" fill="none" stroke="#d8d8d8" stroke-width="1.1"/></svg>
<span style="left:417.8px;top:119px;font-size:12px;line-height:14px;color:#ececec;font-weight:normal;letter-spacing:-0.27px;">OP-Zuordnung</span>
<svg style="left:497.2px;top:116.3px" width="83.30000000000001" height="19" viewBox="0 0 83.30000000000001 19"><rect x="0" y="0" width="83.30000000000001" height="17.6" fill="#3d3d3d"/><rect x="0" y="0" width="1" height="17.6" fill="#222"/><path d="M1.4 8.6 L5.6 1.2" fill="none" stroke="#d8d8d8" stroke-width="1.1"/></svg>
<span style="left:502.7px;top:119px;font-size:12px;line-height:14px;color:#ececec;font-weight:normal;letter-spacing:-0.11px;">Offene Posten</span>
<div style="left:182px;top:138px;width:681px;height:96.5px;background:#fbfbfb;"></div>
<div style="left:182px;top:145px;width:681px;height:89.5px;border-top:1.3px solid #8d8d8d;border-left:1.3px solid #8d8d8d;"></div>
<div style="left:195.4px;top:139px;width:81.4px;height:12px;background:#fbfbfb;"></div>
<span style="left:199.4px;top:138px;font-size:12px;line-height:14px;color:#343434;font-weight:normal;letter-spacing:-0.22px;">Buchungskopf</span>
<div style="left:182px;top:249px;width:681px;height:119px;background:#fbfbfb;"></div>
<div style="left:182px;top:256px;width:681px;height:112px;border-top:1.3px solid #8d8d8d;border-left:1.3px solid #8d8d8d;"></div>
<div style="left:195.4px;top:250px;width:66.9px;height:12px;background:#fbfbfb;"></div>
<span style="left:199.4px;top:249px;font-size:12px;line-height:14px;color:#343434;font-weight:normal;letter-spacing:-0.25px;">Kontodaten</span>
<div style="left:182px;top:381.5px;width:437px;height:53.0px;background:#fbfbfb;"></div>
<div style="left:182px;top:388.5px;width:437px;height:46.0px;border-top:1.3px solid #8d8d8d;border-left:1.3px solid #8d8d8d;"></div>
<div style="left:195.4px;top:382.5px;width:72.6px;height:12px;background:#fbfbfb;"></div>
<span style="left:199.4px;top:382px;font-size:12px;line-height:14px;color:#343434;font-weight:normal;letter-spacing:-0.06px;">Kostenstelle</span>
<div style="left:182px;top:449px;width:437px;height:96.5px;background:#fbfbfb;"></div>
<div style="left:182px;top:456px;width:437px;height:89.5px;border-top:1.3px solid #8d8d8d;border-left:1.3px solid #8d8d8d;"></div>
<div style="left:195.4px;top:450px;width:80.6px;height:12px;background:#fbfbfb;"></div>
<span style="left:199.4px;top:449px;font-size:12px;line-height:14px;color:#343434;font-weight:normal;letter-spacing:-0.16px;">Steuerfindung</span>
<div style="left:619px;top:381.5px;width:250px;height:188.5px;background:#fbfbfb;"></div>
<div style="left:619px;top:388.5px;width:250px;height:181.5px;border-top:1.3px solid #8d8d8d;border-left:1.3px solid #8d8d8d;"></div>
<div style="left:632px;top:382.5px;width:111px;height:12px;background:#fbfbfb;"></div>
<span style="left:636px;top:382px;font-size:12px;line-height:14px;color:#343434;font-weight:normal;letter-spacing:-0.02px;">Erfasste Positionen</span>
<span style="left:186.5px;top:160px;font-size:12px;line-height:14px;color:#343434;font-weight:normal;letter-spacing:-0.25px;">Buchungsdatum</span>
<div style="left:294px;top:158px;width:76.5px;height:17px;background:#dedede;border-top:1px solid #686868;border-left:1px solid #686868;border-right:1px solid #f4f4f4;border-bottom:1px solid #f4f4f4;box-shadow:inset 1px 1px 0 rgba(90,90,90,0.28);"></div>
<span style="left:295.7px;top:160px;font-size:12px;line-height:14px;color:#2c2c2c;font-weight:normal;letter-spacing:-0.40px;">18.07.2012</span>
<span style="left:419.3px;top:160px;font-size:12px;line-height:14px;color:#343434;font-weight:normal;letter-spacing:-0.18px;">Buchungsperiode</span>
<div style="left:527px;top:158px;width:88.5px;height:17px;background:#dedede;border-top:1px solid #686868;border-left:1px solid #686868;border-right:1px solid #f4f4f4;border-bottom:1px solid #f4f4f4;box-shadow:inset 1px 1px 0 rgba(90,90,90,0.28);"></div>
<span style="left:528.2px;top:160px;font-size:12px;line-height:14px;color:#2c2c2c;font-weight:normal;letter-spacing:-0.40px;">2012</span>
<span style="left:635px;top:160px;font-size:12px;line-height:14px;color:#343434;font-weight:normal;letter-spacing:-0.25px;">Buchungsnr.</span>
<div style="left:736.7px;top:158px;width:105.29999999999995px;height:17px;background:#dedede;border-top:1px solid #686868;border-left:1px solid #686868;border-right:1px solid #f4f4f4;border-bottom:1px solid #f4f4f4;box-shadow:inset 1px 1px 0 rgba(90,90,90,0.28);"></div>
<span style="left:738.2px;top:160px;font-size:12px;line-height:14px;color:#2c2c2c;font-weight:normal;letter-spacing:-0.40px;">BUCH-00031</span>
<div style="left:842px;top:157.5px;width:13.6px;height:17.5px;background:#cdcdcd;border:1px solid #b4b4b4;border-right-color:#d6d6d6;border-bottom-color:#d6d6d6;"></div>
<div style="left:843.8px;top:159px;width:11px;height:15px;background:linear-gradient(#fffff2,#f6f3df 70%,#eeead4);border:2px solid #8ca969;border-radius:3.5px;"></div>
<div style="left:844.0px;top:169.4px;width:1.8px;height:1.8px;background:#262626;"></div>
<div style="left:848.1px;top:169.4px;width:1.8px;height:1.8px;background:#262626;"></div>
<div style="left:852.2px;top:169.4px;width:1.8px;height:1.8px;background:#262626;"></div>
<span style="left:186.5px;top:183px;font-size:12px;line-height:14px;color:#343434;font-weight:normal;letter-spacing:-0.33px;">Belegdatum</span>
<div style="left:294px;top:180px;width:78px;height:18px;background:#fff;border:1px solid #cf5b58;border-radius:1px;box-shadow:inset 0 0 0 1px rgba(207,91,88,0.3);"></div>
<span style="left:295.7px;top:183px;font-size:12px;line-height:14px;color:#2c2c2c;font-weight:normal;letter-spacing:-0.40px;">18.07.2012</span>
<span style="left:419.3px;top:183px;font-size:12px;line-height:14px;color:#343434;font-weight:normal;letter-spacing:-0.08px;">Buchungstext</span>
<div style="left:527px;top:181px;width:327.5px;height:17px;background:#dedede;border-top:1px solid #686868;border-left:1px solid #686868;border-right:1px solid #f4f4f4;border-bottom:1px solid #f4f4f4;box-shadow:inset 1px 1px 0 rgba(90,90,90,0.28);"></div>
<span style="left:528.2px;top:183px;font-size:12px;line-height:14px;color:#2c2c2c;font-weight:normal;letter-spacing:-0.33px;">Zahlung</span>
<span style="left:186.5px;top:205px;font-size:12px;line-height:14px;color:#343434;font-weight:normal;letter-spacing:-0.17px;">Belegtext</span>
<div style="left:294px;top:203px;width:233px;height:17px;background:#fff;border-top:1px solid #686868;border-left:1px solid #686868;box-shadow:inset 1px 1px 0 rgba(90,90,90,0.25);"></div>
<span style="left:551.5px;top:205px;font-size:12px;line-height:14px;color:#343434;font-weight:normal;letter-spacing:-0.32px;">Belegnummer</span>
<div style="left:647px;top:203px;width:89px;height:17px;background:#fff;border-top:1px solid #686868;border-left:1px solid #686868;box-shadow:inset 1px 1px 0 rgba(90,90,90,0.25);"></div>
<span style="left:755px;top:205px;font-size:12px;line-height:14px;color:#343434;font-weight:normal;letter-spacing:-0.20px;">Diff</span>
<div style="left:784.4px;top:203px;width:70.10000000000002px;height:17px;background:#dedede;border-top:1px solid #686868;border-left:1px solid #686868;border-right:1px solid #f4f4f4;border-bottom:1px solid #f4f4f4;box-shadow:inset 1px 1px 0 rgba(90,90,90,0.28);"></div>
<span style="left:786.2px;top:205px;font-size:12px;line-height:14px;color:#2c2c2c;font-weight:normal;letter-spacing:-0.34px;">0,00</span>
<span style="left:186.5px;top:272px;font-size:12px;line-height:14px;color:#343434;font-weight:normal;letter-spacing:-0.23px;">Betrag</span>
<div style="left:294px;top:269px;width:90px;height:18px;background:#fff;border:1px solid #cf5b58;border-radius:1px;box-shadow:inset 0 0 0 1px rgba(207,91,88,0.3);"></div>
<span style="left:295.6px;top:272px;font-size:12px;line-height:14px;color:#2c2c2c;font-weight:normal;letter-spacing:-0.28px;">250,00</span>
<div style="left:396.2px;top:270px;width:51.60000000000002px;height:16.5px;background:#dedede;border-top:1px solid #686868;border-left:1px solid #686868;border-right:1px solid #f4f4f4;border-bottom:1px solid #f4f4f4;box-shadow:inset 1px 1px 0 rgba(90,90,90,0.28);"></div>
<span style="left:397.4px;top:272px;font-size:12px;line-height:14px;color:#2c2c2c;font-weight:normal;letter-spacing:-0.18px;">EUR</span>
<span style="left:545.5px;top:272px;font-size:12px;line-height:14px;color:#343434;font-weight:normal;letter-spacing:-0.14px;">Brutto</span>
<div style="left:606px;top:271px;width:11px;height:14.5px;background:#fff;border-top:1px solid #6c6c6c;border-left:1px solid #6c6c6c;box-shadow:inset 1px 1px 0 rgba(90,90,90,0.25);"></div>
<svg style="left:607px;top:272px" width="10" height="13"><path d="M2.2 3.6 L2.9 10.6" fill="none" stroke="#1a1a1a" stroke-width="1.9"/><path d="M2.9 10.6 L8.8 3" fill="none" stroke="#1a1a1a" stroke-width="1.2"/></svg>
<span style="left:420px;top:298px;font-size:12px;line-height:14px;color:#343434;font-weight:normal;letter-spacing:-0.11px;">erfasster Saldo</span>
<span style="left:527px;top:298px;font-size:12px;line-height:14px;color:#343434;font-weight:normal;letter-spacing:-0.28px;">Kontowährung</span>
<span style="left:635px;top:298px;font-size:12px;line-height:14px;color:#343434;font-weight:normal;letter-spacing:-0.21px;">Kontobezeichnung</span>
<span style="left:186.5px;top:316px;font-size:12px;line-height:14px;color:#343434;font-weight:normal;letter-spacing:-0.22px;">Konto Soll</span>
<div style="left:294px;top:314px;width:104.5px;height:17px;background:#fff;border-top:1px solid #686868;border-left:1px solid #686868;box-shadow:inset 1px 1px 0 rgba(90,90,90,0.25);"></div>
<span style="left:295.6px;top:316px;font-size:12px;line-height:14px;color:#2c2c2c;font-weight:normal;letter-spacing:-0.46px;">KRED-00001</span>
<div style="left:399px;top:313.5px;width:13.6px;height:17.5px;background:#cdcdcd;border:1px solid #b4b4b4;border-right-color:#d6d6d6;border-bottom-color:#d6d6d6;"></div>
<div style="left:400.8px;top:315px;width:11px;height:15px;background:linear-gradient(#fffff2,#f6f3df 70%,#eeead4);border:2px solid #8ca969;border-radius:3.5px;"></div>
<div style="left:401.0px;top:325.4px;width:1.8px;height:1.8px;background:#262626;"></div>
<div style="left:405.09999999999997px;top:325.4px;width:1.8px;height:1.8px;background:#262626;"></div>
<div style="left:409.2px;top:325.4px;width:1.8px;height:1.8px;background:#262626;"></div>
<div style="left:420px;top:314px;width:88px;height:17px;background:#dedede;border-top:1px solid #686868;border-left:1px solid #686868;border-right:1px solid #f4f4f4;border-bottom:1px solid #f4f4f4;box-shadow:inset 1px 1px 0 rgba(90,90,90,0.28);"></div>
<span style="left:421.2px;top:316px;font-size:12px;line-height:14px;color:#2c2c2c;font-weight:normal;letter-spacing:-0.20px;">220,00</span>
<div style="left:527px;top:314px;width:58.5px;height:17px;background:#dedede;border-top:1px solid #686868;border-left:1px solid #686868;border-right:1px solid #f4f4f4;border-bottom:1px solid #f4f4f4;box-shadow:inset 1px 1px 0 rgba(90,90,90,0.28);"></div>
<span style="left:528.2px;top:316px;font-size:12px;line-height:14px;color:#2c2c2c;font-weight:normal;letter-spacing:-0.08px;">EUR</span>
<div style="left:635px;top:314px;width:214px;height:17px;background:#dedede;border-top:1px solid #686868;border-left:1px solid #686868;border-right:1px solid #f4f4f4;border-bottom:1px solid #f4f4f4;box-shadow:inset 1px 1px 0 rgba(90,90,90,0.28);"></div>
<span style="left:636.4px;top:316px;font-size:12px;line-height:14px;color:#2c2c2c;font-weight:normal;letter-spacing:-0.04px;">Kreditor America Soup Inc.  New York</span>
<span style="left:186.5px;top:338px;font-size:12px;line-height:14px;color:#343434;font-weight:normal;letter-spacing:-0.31px;">Konto Haben</span>
<div style="left:294px;top:336px;width:104.5px;height:17px;background:#fff;border-top:1px solid #686868;border-left:1px solid #686868;box-shadow:inset 1px 1px 0 rgba(90,90,90,0.25);"></div>
<span style="left:295.6px;top:338px;font-size:12px;line-height:14px;color:#2c2c2c;font-weight:normal;letter-spacing:-0.43px;">1210</span>
<div style="left:399px;top:335.5px;width:13.6px;height:17.5px;background:#cdcdcd;border:1px solid #b4b4b4;border-right-color:#d6d6d6;border-bottom-color:#d6d6d6;"></div>
<div style="left:400.8px;top:337px;width:11px;height:15px;background:linear-gradient(#fffff2,#f6f3df 70%,#eeead4);border:2px solid #8ca969;border-radius:3.5px;"></div>
<div style="left:401.0px;top:347.4px;width:1.8px;height:1.8px;background:#262626;"></div>
<div style="left:405.09999999999997px;top:347.4px;width:1.8px;height:1.8px;background:#262626;"></div>
<div style="left:409.2px;top:347.4px;width:1.8px;height:1.8px;background:#262626;"></div>
<div style="left:420px;top:336px;width:88px;height:17px;background:#dedede;border-top:1px solid #686868;border-left:1px solid #686868;border-right:1px solid #f4f4f4;border-bottom:1px solid #f4f4f4;box-shadow:inset 1px 1px 0 rgba(90,90,90,0.28);"></div>
<span style="left:421.6px;top:338px;font-size:12px;line-height:14px;color:#2c2c2c;font-weight:normal;letter-spacing:-0.23px;">-970,00</span>
<div style="left:527px;top:336px;width:58.5px;height:17px;background:#dedede;border-top:1px solid #686868;border-left:1px solid #686868;border-right:1px solid #f4f4f4;border-bottom:1px solid #f4f4f4;box-shadow:inset 1px 1px 0 rgba(90,90,90,0.28);"></div>
<span style="left:528.2px;top:338px;font-size:12px;line-height:14px;color:#2c2c2c;font-weight:normal;letter-spacing:-0.08px;">EUR</span>
<div style="left:635px;top:336px;width:214px;height:17px;background:#dedede;border-top:1px solid #686868;border-left:1px solid #686868;border-right:1px solid #f4f4f4;border-bottom:1px solid #f4f4f4;box-shadow:inset 1px 1px 0 rgba(90,90,90,0.28);"></div>
<span style="left:636.4px;top:338px;font-size:12px;line-height:14px;color:#2c2c2c;font-weight:normal;letter-spacing:-0.18px;">Forderungen aus Lieferungen u.Leistung</span>
<span style="left:186.5px;top:405px;font-size:12px;line-height:14px;color:#343434;font-weight:normal;letter-spacing:-0.11px;">Kostenstelle</span>
<div style="left:276px;top:403px;width:105.5px;height:17px;background:#dedede;border-top:1px solid #686868;border-left:1px solid #686868;border-right:1px solid #f4f4f4;border-bottom:1px solid #f4f4f4;box-shadow:inset 1px 1px 0 rgba(90,90,90,0.28);"></div>
<div style="left:381px;top:402.5px;width:13.6px;height:17.5px;background:#cdcdcd;border:1px solid #b4b4b4;border-right-color:#d6d6d6;border-bottom-color:#d6d6d6;"></div>
<div style="left:382.8px;top:404px;width:11px;height:15px;background:linear-gradient(#fffff2,#f6f3df 70%,#eeead4);border:2px solid #8ca969;border-radius:3.5px;"></div>
<div style="left:383.0px;top:414.4px;width:1.8px;height:1.8px;background:#262626;"></div>
<div style="left:387.09999999999997px;top:414.4px;width:1.8px;height:1.8px;background:#262626;"></div>
<div style="left:391.2px;top:414.4px;width:1.8px;height:1.8px;background:#262626;"></div>
<span style="left:407.8px;top:405px;font-size:12px;line-height:14px;color:#343434;font-weight:normal;letter-spacing:-0.21px;">Kostenträger</span>
<div style="left:497.8px;top:403px;width:105.69999999999999px;height:17px;background:#dedede;border-top:1px solid #686868;border-left:1px solid #686868;border-right:1px solid #f4f4f4;border-bottom:1px solid #f4f4f4;box-shadow:inset 1px 1px 0 rgba(90,90,90,0.28);"></div>
<div style="left:603px;top:402.5px;width:13.6px;height:17.5px;background:#cdcdcd;border:1px solid #b4b4b4;border-right-color:#d6d6d6;border-bottom-color:#d6d6d6;"></div>
<div style="left:604.8px;top:404px;width:11px;height:15px;background:linear-gradient(#fffff2,#f6f3df 70%,#eeead4);border:2px solid #8ca969;border-radius:3.5px;"></div>
<div style="left:605.0px;top:414.4px;width:1.8px;height:1.8px;background:#262626;"></div>
<div style="left:609.1px;top:414.4px;width:1.8px;height:1.8px;background:#262626;"></div>
<div style="left:613.2px;top:414.4px;width:1.8px;height:1.8px;background:#262626;"></div>
<div style="left:187px;top:470px;width:196.5px;height:16.5px;background:#dddddd;border-bottom:1.5px solid #5a5a5a;border-right:1.5px solid #7a7a7a;border-top:1px solid #f0f0f0;"></div>
<span style="left:190px;top:471px;font-size:12px;line-height:14px;color:#222;font-weight:normal;letter-spacing:-0.28px;">Keine Steuer</span>
<svg style="left:370px;top:474.6px" width="12" height="8"><path d="M0.4 0.5 L11.4 0.5 L5.9 6.6 Z" fill="#161616"/></svg>
<span style="left:407.8px;top:471px;font-size:12px;line-height:14px;color:#343434;font-weight:normal;letter-spacing:-0.10px;">Steuerschlüssel</span>
<div style="left:497.8px;top:469px;width:105.69999999999999px;height:17px;background:#fff;border-top:1px solid #686868;border-left:1px solid #686868;box-shadow:inset 1px 1px 0 rgba(90,90,90,0.25);"></div>
<div style="left:603px;top:468.5px;width:13.6px;height:17.5px;background:#cdcdcd;border:1px solid #b4b4b4;border-right-color:#d6d6d6;border-bottom-color:#d6d6d6;"></div>
<div style="left:604.8px;top:470px;width:11px;height:15px;background:linear-gradient(#fffff2,#f6f3df 70%,#eeead4);border:2px solid #8ca969;border-radius:3.5px;"></div>
<svg style="left:605.5px;top:471.5px" width="10" height="7"><path d="M0.3 0.3 L9.7 0.3 L5 6.5 Z" fill="#f01818"/></svg>
<div style="left:605.0px;top:480.4px;width:1.8px;height:1.8px;background:#262626;"></div>
<div style="left:609.1px;top:480.4px;width:1.8px;height:1.8px;background:#262626;"></div>
<div style="left:613.2px;top:480.4px;width:1.8px;height:1.8px;background:#262626;"></div>
<span style="left:186.5px;top:494px;font-size:12px;line-height:14px;color:#343434;font-weight:normal;letter-spacing:-0.09px;">MWSt.-Her</span>
<div style="left:246px;top:492px;width:34.5px;height:17px;background:#fff;border-top:1px solid #686868;border-left:1px solid #686868;box-shadow:inset 1px 1px 0 rgba(90,90,90,0.25);"></div>
<div style="left:280px;top:491.5px;width:13.6px;height:17.5px;background:#cdcdcd;border:1px solid #b4b4b4;border-right-color:#d6d6d6;border-bottom-color:#d6d6d6;"></div>
<div style="left:281.8px;top:493px;width:11px;height:15px;background:linear-gradient(#fffff2,#f6f3df 70%,#eeead4);border:2px solid #8ca969;border-radius:3.5px;"></div>
<div style="left:282.0px;top:503.4px;width:1.8px;height:1.8px;background:#262626;"></div>
<div style="left:286.09999999999997px;top:503.4px;width:1.8px;height:1.8px;background:#262626;"></div>
<div style="left:290.2px;top:503.4px;width:1.8px;height:1.8px;background:#262626;"></div>
<span style="left:294px;top:494px;font-size:12px;line-height:14px;color:#343434;font-weight:normal;letter-spacing:-0.56px;">.KZ</span>
<div style="left:330px;top:492px;width:33.5px;height:17px;background:#fff;border-top:1px solid #686868;border-left:1px solid #686868;box-shadow:inset 1px 1px 0 rgba(90,90,90,0.25);"></div>
<div style="left:363px;top:491.5px;width:13.6px;height:17.5px;background:#cdcdcd;border:1px solid #b4b4b4;border-right-color:#d6d6d6;border-bottom-color:#d6d6d6;"></div>
<div style="left:364.8px;top:493px;width:11px;height:15px;background:linear-gradient(#fffff2,#f6f3df 70%,#eeead4);border:2px solid #8ca969;border-radius:3.5px;"></div>
<div style="left:365.0px;top:503.4px;width:1.8px;height:1.8px;background:#262626;"></div>
<div style="left:369.09999999999997px;top:503.4px;width:1.8px;height:1.8px;background:#262626;"></div>
<div style="left:373.2px;top:503.4px;width:1.8px;height:1.8px;background:#262626;"></div>
<span style="left:407.8px;top:494px;font-size:12px;line-height:14px;color:#343434;font-weight:normal;letter-spacing:-0.17px;">man. Steuerbetrag</span>
<div style="left:515.5px;top:492px;width:89.0px;height:17px;background:#fff;border-top:1px solid #686868;border-left:1px solid #686868;box-shadow:inset 1px 1px 0 rgba(90,90,90,0.25);"></div>
<span style="left:516.7px;top:494px;font-size:12px;line-height:14px;color:#2c2c2c;font-weight:normal;letter-spacing:-0.01px;">0,00</span>
<span style="left:186.5px;top:517px;font-size:12px;line-height:14px;color:#343434;font-weight:normal;letter-spacing:-0.16px;">DATEV Konto-Nr.</span>
<div style="left:294.3px;top:515px;width:117.5px;height:16.5px;background:#dedede;border-top:1px solid #686868;border-left:1px solid #686868;border-right:1px solid #f4f4f4;border-bottom:1px solid #f4f4f4;box-shadow:inset 1px 1px 0 rgba(90,90,90,0.28);"></div>
<div style="left:623px;top:402px;width:228px;height:170px;background:#fff;border:1px solid #c6d4ab;"></div>
<div style="left:624px;top:421px;width:17.5px;height:150px;background:#ecead9;"></div>
<div style="left:641.5px;top:403.5px;width:70.5px;height:17.5px;background:#c4c4c4;border-top:1.2px solid #8f8f8f;border-left:1.2px solid #8f8f8f;border-right:1px solid #808080;border-bottom:1px solid #808080;"></div>
<div style="left:712px;top:403.5px;width:137.5px;height:17.5px;background:#c4c4c4;border-top:1.2px solid #8f8f8f;border-left:1.2px solid #8f8f8f;border-right:1px solid #808080;border-bottom:1px solid #808080;"></div>
<div style="left:624.5px;top:403.5px;width:17px;height:17.5px;background:#d4d4d0;"></div>
<div style="left:626px;top:404.5px;width:13.5px;height:15.5px;background:linear-gradient(#fffff4,#f0eed8);border:1.3px solid #8ea05c;border-radius:2.5px;"></div>
<div style="left:628.6px;top:415.4px;width:1.4px;height:1.4px;background:#666;"></div>
<div style="left:631.8px;top:415.4px;width:1.4px;height:1.4px;background:#666;"></div>
<div style="left:635px;top:415.4px;width:1.4px;height:1.4px;background:#666;"></div>
<span style="left:643.3px;top:406px;font-size:12px;line-height:14px;color:#222;font-weight:normal;letter-spacing:-0.20px;">Konto Soll</span>
<svg style="left:697.5px;top:407.5px" width="13" height="9"><path d="M1 8 L6.5 1.5 L12 8 Z" fill="#d0d0d0" stroke="#f4f4f4" stroke-width="1"/><path d="M1 8 L6.5 1.5" stroke="#8b8b8b" stroke-width="1" fill="none"/></svg>
<span style="left:732.2px;top:406px;font-size:12px;line-height:14px;color:#222;font-weight:normal;letter-spacing:-0.20px;">Kontobezeichnung</span>
<div style="left:624px;top:421.3px;width:225.5px;height:17.8px;background:#fff;border-top:1.3px solid #c04040;border-bottom:1.3px solid #c04040;"></div>
<div style="left:624px;top:422.5px;width:17.5px;height:15.3px;background:#cdcdcd;"></div>
<div style="left:641.3px;top:421.3px;width:1.2px;height:17.8px;background:#555;"></div>
<div style="left:711.6px;top:421.3px;width:1.2px;height:17.8px;background:#555;"></div>
<svg style="left:627px;top:424.5px" width="11" height="11" viewBox="-5.5 -5.5 11 11"><path d="M0 -5.2 L1.4 -3.4 L3.7 -3.7 L3.4 -1.4 L5.2 0 L3.4 1.4 L3.7 3.7 L1.4 3.4 L0 5.2 L-1.4 3.4 L-3.7 3.7 L-3.4 1.4 L-5.2 0 L-3.4 -1.4 L-3.7 -3.7 L-1.4 -3.4 Z" fill="#0a0af0"/></svg>
<span style="left:643.8px;top:423px;font-size:12px;line-height:14px;color:#3434fa;font-weight:normal;letter-spacing:-0.35px;width:67.6px;overflow:hidden;">KRED-00001</span>
<span style="left:714.4px;top:423px;font-size:12px;line-height:14px;color:#3434fa;font-weight:normal;width:134.7px;overflow:hidden;letter-spacing:0px;">Kreditor America Soup Inc.</span>
<div style="left:851px;top:402px;width:10.5px;height:170px;background:linear-gradient(90deg,#f0f0e6,#fbfbf6 50%,#f3f3ea);"></div>
<div style="left:852px;top:403px;width:9.5px;height:11px;background:linear-gradient(90deg,#b4c397,#9fb07d 60%,#92a570);border:1px solid #c9d6b0;border-radius:1px;"></div>
<svg style="left:852px;top:403px" width="10" height="11" fill="none" stroke="#fff" stroke-width="1.5"><path d="M2 7 L4.8 4.2 L7.6 7"/></svg>
<svg style="left:715px;top:128px" width="170" height="78"><path fill-rule="evenodd" fill="#fe0000" d="M8.6 38.5 a76 33 0 1 0 152 0 a76 33 0 1 0 -152 0 Z M19.8 38.2 a64.8 24.4 0 1 0 129.6 0 a64.8 24.4 0 1 0 -129.6 0 Z"/></svg>
</div>
</body></html>
